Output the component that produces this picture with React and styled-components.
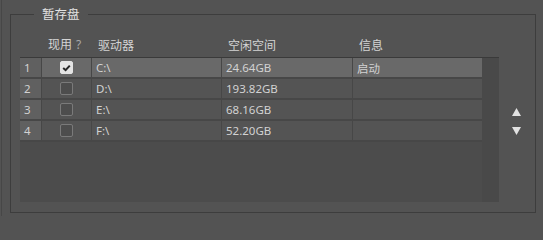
import styled, { createGlobalStyle } from "styled-components";

const drives = [
  { id: 1, used: true, drive: "C:\\", free: "24.64GB", info: "启动" },
  { id: 2, used: false, drive: "D:\\", free: "193.82GB", info: "" },
  { id: 3, used: false, drive: "E:\\", free: "68.16GB", info: "" },
  { id: 4, used: false, drive: "F:\\", free: "52.20GB", info: "" },
];

const Global = createGlobalStyle`
  html, body {
    margin: 0;
    background: #535353;
  }
  * { box-sizing: border-box; }
`;

const Frame = styled.div`
  height: 216px;
  margin-left: 1px;
  padding-top: 6px;
  border-left: 1px solid #474747;
  overflow: hidden;
  font-family: "Noto Sans", "Noto Sans CJK SC", sans-serif;
`;

const Group = styled.fieldset`
  margin: 0 0 0 8px;
  width: 526px;
  height: 207px;
  padding: 0 0 0 9px;
  border: 1px solid #3d3d3d;
  min-width: 0;
`;

const Legend = styled.legend`
  margin-inline-start: 14px;
  padding: 0 8px;
  font-family: "Noto Sans CJK SC", sans-serif;
  font-size: 12.5px;
  line-height: 16px;
  color: #e2e2e2;
`;

const cols = "21px 49px 129px 130px 129px";

const Header = styled.div`
  display: grid;
  grid-template-columns: ${cols};
  column-gap: 1px;
  height: 35px;
  align-items: end;
  padding-bottom: 4px;
`;

const HeadCell = styled.div`
  padding-left: 6px;
  font-family: "Noto Sans CJK SC", sans-serif;
  font-size: 12px;
  line-height: 16px;
  color: #d4d4d4;
  white-space: nowrap;
`;

const Hint = styled.span`
  margin-left: 4px;
  color: #a8a8a8;
  font-family: "Noto Sans", sans-serif;
`;

const Body = styled.div`
  display: flex;
`;

const Table = styled.div`
  display: flex;
  width: 479px;
  height: 145px;
  border-top: 1px solid #3a3a3a;
  background: #4c4c4c;
`;

const Rows = styled.div`
  display: flex;
  flex-direction: column;
`;

const Strip = styled.div`
  width: 17px;
  background: #494949;
`;

const Row = styled.div`
  display: grid;
  grid-template-columns: ${cols};
  column-gap: 1px;
  height: 21px;
  border-bottom: 2px solid #474747;
  background: #474747;
`;

const Cell = styled.div`
  display: flex;
  align-items: center;
  justify-content: ${(p) => (p.$center ? "center" : "flex-start")};
  padding-left: ${(p) => (p.$center ? 0 : 4)}px;
  background: ${(p) => (p.$index ? "#606060" : p.$selected ? "#696969" : "#545454")};
  font-size: 11.5px;
  color: #d2d2d2;
  white-space: nowrap;
`;

const Box = styled.div`
  width: 13px;
  height: 13px;
  border-radius: 2px;
  display: flex;
  align-items: center;
  justify-content: center;
  background: ${(p) => (p.$checked ? "#e4e4e4" : "#4d4d4d")};
  border: 1px solid ${(p) => (p.$checked ? "#e4e4e4" : "#7a7a7a")};
`;

const Side = styled.div`
  width: 35px;
  display: flex;
  flex-direction: column;
  align-items: center;
  gap: 11px;
  padding-top: 51px;
`;

const Arrow = ({ down }) => (
  <svg width="9" height="8" viewBox="0 0 9 8">
    <path d={down ? "M0 0 H9 L4.5 8 Z" : "M0 8 H9 L4.5 0 Z"} fill="#e2e2e2" />
  </svg>
);

const Check = ({ checked }) => (
  <Box $checked={checked}>
    {checked && (
      <svg width="9" height="8" viewBox="0 0 9 8">
        <path d="M1.2 4 L3.6 6.2 L7.8 1.6" stroke="#262626" strokeWidth="2" fill="none" />
      </svg>
    )}
  </Box>
);

export default function App() {
  return (
    <>
      <Global />
      <Frame>
        <Group>
          <Legend>暂存盘</Legend>
          <Header>
            <HeadCell />
            <HeadCell>
              现用<Hint>?</Hint>
            </HeadCell>
            <HeadCell>驱动器</HeadCell>
            <HeadCell>空闲空间</HeadCell>
            <HeadCell>信息</HeadCell>
          </Header>
          <Body>
            <Table>
              <Rows>
                {drives.map((d) => (
                  <Row key={d.id}>
                    <Cell $index>{d.id}</Cell>
                    <Cell $center $selected={d.used}>
                      <Check checked={d.used} />
                    </Cell>
                    <Cell $selected={d.used}>{d.drive}</Cell>
                    <Cell $selected={d.used}>{d.free}</Cell>
                    <Cell $selected={d.used}>{d.info}</Cell>
                  </Row>
                ))}
              </Rows>
              <Strip />
            </Table>
            <Side>
              <Arrow />
              <Arrow down />
            </Side>
          </Body>
        </Group>
      </Frame>
    </>
  );
}
